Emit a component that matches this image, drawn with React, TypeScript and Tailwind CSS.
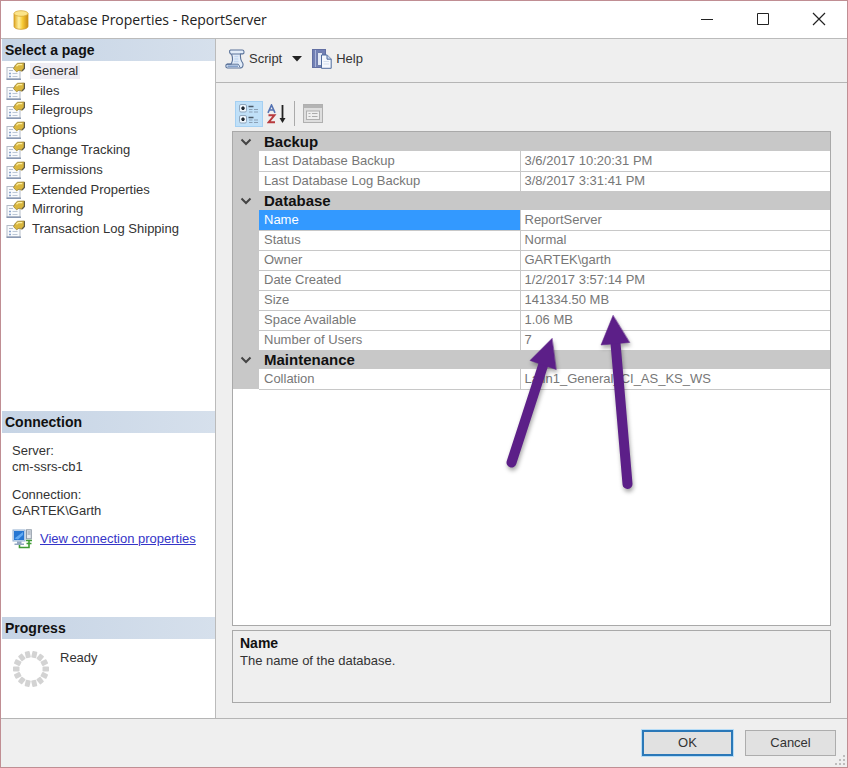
import { useState } from "react";
import type { ReactNode } from "react";

const pages = [
  "General",
  "Files",
  "Filegroups",
  "Options",
  "Change Tracking",
  "Permissions",
  "Extended Properties",
  "Mirroring",
  "Transaction Log Shipping",
];

type Category = { title: string; rows: [string, string][] };

const categories: Category[] = [
  {
    title: "Backup",
    rows: [
      ["Last Database Backup", "3/6/2017 10:20:31 PM"],
      ["Last Database Log Backup", "3/8/2017 3:31:41 PM"],
    ],
  },
  {
    title: "Database",
    rows: [
      ["Name", "ReportServer"],
      ["Status", "Normal"],
      ["Owner", "GARTEK\\garth"],
      ["Date Created", "1/2/2017 3:57:14 PM"],
      ["Size", "141334.50 MB"],
      ["Space Available", "1.06 MB"],
      ["Number of Users", "7"],
    ],
  },
  {
    title: "Maintenance",
    rows: [["Collation", "Latin1_General_CI_AS_KS_WS"]],
  },
];

const DatabaseIcon = () => (
  <svg width="16" height="20" viewBox="0 0 16 20">
    <defs>
      <linearGradient id="gold">
        <stop offset="0" stopColor="#e0a820" />
        <stop offset="0.35" stopColor="#fff0a0" />
        <stop offset="0.6" stopColor="#f8cc38" />
        <stop offset="1" stopColor="#c98a14" />
      </linearGradient>
    </defs>
    <path
      d="M1 3.5v13C1 18 4 19.3 8 19.3s7-1.3 7-2.8v-13z"
      fill="url(#gold)"
      stroke="#cf9a25"
      strokeWidth="0.8"
    />
    <ellipse cx="8" cy="3.5" rx="7" ry="2.8" fill="#fbe48a" stroke="#d8a93a" strokeWidth="0.8" />
  </svg>
);

const PageIcon = () => (
  <svg width="20" height="18" viewBox="0 0 20 18" className="shrink-0">
    <rect x="1" y="5.5" width="13" height="11.5" fill="#f8fafc" stroke="#b4bcc7" />
    <path d="M0.5 17.2h14.5" stroke="#7587a5" strokeWidth="1.2" />
    <path d="M3 8.5h4" stroke="#b5bfcc" />
    <path d="M3 11.5h2M3 14.5h2" stroke="#8aa5cc" strokeWidth="1.4" />
    <path d="M6.5 11.5h5M6.5 14.5h5" stroke="#bcc7d6" strokeWidth="1.2" />
    <path
      d="M7.5 6.5 9.5 3l2-1.7L18.5 1v5.5L16 9.2l-3-1-2.4 1.6-1.6-1.6z"
      fill="#d9b63e"
      stroke="#9a8436"
      strokeWidth="0.8"
    />
    <path d="m10.5 4.2 1.8-1.6h4" stroke="#fff0a0" strokeWidth="1.2" fill="none" />
    <path d="M18.4 1.2v5.2L16 9" stroke="#5f5a48" strokeWidth="1.2" fill="none" />
  </svg>
);

const ScriptIcon = () => (
  <svg width="20" height="20" viewBox="0 0 20 20">
    <path
      d="M5.5 1h11.8c2 0 2.4 3.4.6 3.9h-2.4c-.4 3 .4 6.800 2.300 9.400.8 2-.2 4.500-2 4.700H2.300c-2-.4-2-3.600 0-3.900H6c1.800-2.800 1.700-6.800.6-9.800C4.600 5 3.700 1.600 5.500 1z"
      fill="#e3edf9"
      stroke="#5a7299"
      strokeWidth="1.1"
    />
    <path d="M6.8 5h8.2M1.8 15.200h11.400c1.200 1 1 2.800 2.300 3.400" stroke="#5a7299" fill="none" />
    <path d="M9.300 7.500h4M9.300 10h4M9 12.500h4.500" stroke="#c4d7f0" strokeWidth="1.3" />
    <path d="M2.500 17.200h10.500" stroke="#7f9cc8" strokeWidth="1.5" />
  </svg>
);

const HelpIcon = () => (
  <svg width="20" height="20" viewBox="0 0 20 20">
    <rect x="0.5" y="0.5" width="13" height="18" fill="#7180b4" stroke="#626fa3" />
    <path d="M3.5 1v17" stroke="#aab4d8" />
    <path d="M5.5 3.5h5v13h-5z" fill="#e4eaf6" stroke="#6f7cab" />
    <path d="M9.5 6h5.7l4 4v9.300H9.500z" fill="#f4f8fd" stroke="#4f6c9e" />
    <path d="M15 6v4.200h4.200" fill="#c5d5ec" stroke="#4f6c9e" />
    <path d="M11.500 12.500h5.500M11.500 15h5.500" stroke="#d3deed" />
  </svg>
);

const CategorizedIcon = () => (
  <svg width="20" height="20" viewBox="0 0 20 20">
    <rect x="0.5" y="0.5" width="7" height="7.5" rx="1.5" fill="#eef6fd" stroke="#8fa6bd" />
    <rect x="0.5" y="11.5" width="7" height="7.5" rx="1.5" fill="#eef6fd" stroke="#8fa6bd" />
    <path d="M2.3 4.3h3.4M4 2.6v3.4M2.3 15.3h3.4M4 13.6v3.4" stroke="#1f2730" strokeWidth="2" />
    <path d="M9.5 2.500h5M9.500 13.500h5" stroke="#4c5a68" strokeWidth="1.3" />
    <path
      d="M10 5.500h3.500M15 5.500h4M10 8h3.500M15 8h4M10 16h3.500M15 16h4M10 18.500h3.500M15 18.500h4"
      stroke="#8ba0b5"
      strokeWidth="1.2"
    />
  </svg>
);

const SortIcon = () => (
  <svg width="20" height="20" viewBox="0 0 20 20" fill="none">
    <path d="M1 8.800 4.500 1 8 8.800M2.300 6h4.400" stroke="#5573b3" strokeWidth="1.6" />
    <path d="M1.500 11.200h6L1.700 18.200h6.300" stroke="#b83a3e" strokeWidth="1.9" />
    <path d="M15.500 1v15" stroke="#222" strokeWidth="1.8" />
    <path d="m12.500 14 3 5 3-5z" fill="#222" />
  </svg>
);

const PropertyPagesIcon = () => (
  <svg width="20" height="19" viewBox="0 0 20 19" fill="none">
    <rect x="0.5" y="0.5" width="19" height="18" fill="#dedede" stroke="#b0b0b0" />
    <path d="M1 2.500h18" stroke="#b4b4b4" strokeWidth="3" />
    <rect x="3.5" y="7" width="13" height="8.5" fill="#efefef" stroke="#b0b0b0" />
    <path d="M5.500 9.500h2M9 9.500h5.500M5.500 12.500h2M9 12.500h5.500" stroke="#adadad" strokeWidth="1.2" />
  </svg>
);

const ConnectionIcon = () => (
  <svg width="21" height="20" viewBox="0 0 21 20" fill="none">
    <rect x="1" y="1" width="12" height="11" fill="#d8e9fa" stroke="#8fadd0" />
    <rect x="2" y="2" width="10" height="9" fill="#2576d2" />
    <path d="M2.500 9.500 11 3v3L6 10.500z" fill="#62aaf2" />
    <path d="M5 12.500h4.500v2H12V16H2.500v-1.500H5z" fill="#91a6c0" />
    <rect x="14.5" y="0.8" width="4.8" height="9" fill="#e6eaef" stroke="#8c98a6" />
    <path d="M15.500 3h3M15.500 5h3" stroke="#8c98a6" />
    <path d="M7.500 16v2.500H17V11M14 11.500h6M14.500 14.500h5" stroke="#3f9b35" strokeWidth="1.6" />
  </svg>
);

const Spinner = () => (
  <svg width="38" height="38" viewBox="0 0 38 38">
    {Array.from({ length: 14 }, (_, i) => (
      <rect
        key={i}
        x="16.5"
        y="1"
        width="5"
        height="6.5"
        rx="0.8"
        fill="#d3d3d3"
        transform={`rotate(${(i * 360) / 14 + 13} 19 19)`}
      />
    ))}
  </svg>
);

// purple callout arrows drawn over the property grid
const Arrows = () => (
  <svg
    width="150"
    height="190"
    viewBox="500 310 150 190"
    className="pointer-events-none absolute left-[267px] top-[178px] drop-shadow-[1px_3px_2px_rgba(0,0,0,0.35)]"
  >
    <g fill="#5c1f88" stroke="#5c1f88" strokeLinecap="round">
      <path d="M511.500 462.500 543.500 364" strokeWidth="10" />
      <path d="M552 338.500 530 360.500 556 369.500z" strokeWidth="0.5" />
      <path d="M627.500 484 615.500 343" strokeWidth="10" />
      <path d="M613 315.500 601 345 629.500 342.500z" strokeWidth="0.5" />
    </g>
  </svg>
);

const SectionHeader = ({ children }: { children: ReactNode }) => (
  <h2 className="h-[22px] bg-linear-to-r from-[#c6d4e5] to-[#d6e0ec] pl-[3px] text-[14px] leading-[22px] font-bold text-[#111]">
    {children}
  </h2>
);

const Chevron = () => (
  <svg width="12" height="8" viewBox="0 0 12 8" fill="none" className="mx-auto">
    <path d="m1.500 1.500 4.500 4.500 4.500-4.500" stroke="#444" strokeWidth="2" />
  </svg>
);

const App = () => {
  const [page, setPage] = useState("General");
  const [selected, setSelected] = useState("Name");

  return (
    <div className="flex min-h-screen flex-col border border-[#c08e93] bg-[#efefef] font-['Liberation_Sans',Arial,sans-serif] text-[13px] leading-4 text-[#333]">
      <header className="flex h-[38px] items-center border-b border-[#bbb] bg-white pl-3">
        <DatabaseIcon />
        <h1 className="ml-[7px] flex-1 font-['Open_Sans',sans-serif] text-[14px] text-[#222]">
          Database Properties - ReportServer
        </h1>
        <div className="flex h-full pb-[2px]">
          <button aria-label="Minimize" className="flex w-14 items-center justify-center">
            <svg width="14" height="14" viewBox="0 0 14 14" stroke="#222">
              <path d="M1 7.500h12" />
            </svg>
          </button>
          <button aria-label="Maximize" className="flex w-14 items-center justify-center">
            <svg width="14" height="14" viewBox="0 0 14 14" fill="none" stroke="#222">
              <path d="M1.500 1.500h11v11h-11z" />
            </svg>
          </button>
          <button aria-label="Close" className="flex w-14 items-center justify-center">
            <svg width="14" height="14" viewBox="0 0 14 14" stroke="#222" strokeWidth="1.2">
              <path d="m1 1 12 12M13 1 1 13" />
            </svg>
          </button>
        </div>
      </header>

      <main className="flex flex-1 border-b border-[#b5b5b5]">
        <aside className="flex w-[215px] shrink-0 flex-col border-r border-[#bbb] bg-white pl-px">
          <SectionHeader>Select a page</SectionHeader>
          <nav className="flex-1">
            <ul className="flex h-[178px] flex-col">
              {pages.map((item) => (
                <li key={item} className="flex-1">
                  <button
                    onClick={() => setPage(item)}
                    className="flex h-full items-center gap-1 pl-1 text-left"
                  >
                    <PageIcon />
                    <span className={page === item ? "bg-[#efedf4] px-[2px]" : "px-[2px]"}>
                      {item}
                    </span>
                  </button>
                </li>
              ))}
            </ul>
          </nav>

          <SectionHeader>Connection</SectionHeader>
          <div className="h-[184px] px-[10px] pt-[10px]">
            <p>Server:</p>
            <p>cm-ssrs-cb1</p>
            <p className="mt-3">Connection:</p>
            <p>GARTEK\Garth</p>
            <div className="mt-[10px] flex items-center gap-[7px]">
              <ConnectionIcon />
              <a href="#connection" className="text-[#3535c8] underline">
                View connection properties
              </a>
            </div>
          </div>

          <SectionHeader>Progress</SectionHeader>
          <div className="flex h-[79px] gap-[10px] pt-[11px] pl-[10px]">
            <Spinner />
            <p>Ready</p>
          </div>
        </aside>

        <section className="flex min-w-0 flex-1 flex-col">
          <div className="flex h-[44px] items-center border-b border-[#b5b5b5] pb-[3px] pl-[9px]">
            <button className="flex items-center gap-1">
              <ScriptIcon />
              Script
            </button>
            <button aria-label="Script options" className="flex w-[30px] justify-center">
              <svg width="10" height="6" viewBox="0 0 10 6">
                <path d="M0 0h10L5 5.500z" fill="#222" />
              </svg>
            </button>
            <button className="flex items-center gap-1">
              <HelpIcon />
              Help
            </button>
          </div>

          <div className="flex flex-1 flex-col px-4 pt-[17px] pb-[15px]">
            <div className="mb-1 flex h-[27px] items-center pl-[3px]">
              <button
                aria-label="Categorized"
                className="flex h-[26px] w-[28px] items-center justify-center border border-[#a5d0f2] bg-[#c0e0f8]"
              >
                <CategorizedIcon />
              </button>
              <button aria-label="Alphabetical" className="flex w-[28px] items-center justify-center">
                <SortIcon />
              </button>
              <div className="ml-[3px] h-[25px] w-px bg-[#aaa]" />
              <button aria-label="Property pages" disabled className="ml-2">
                <PropertyPagesIcon />
              </button>
            </div>

            <div className="relative flex-1 border border-[#a9a9a9] bg-white">
              <table className="w-full table-fixed border-collapse text-[#777]">
                <colgroup>
                  <col className="w-[26px]" />
                  <col className="w-[261px]" />
                  <col />
                </colgroup>
                {categories.map((category) => (
                  <tbody key={category.title}>
                    <tr className="h-[19px] bg-[#c8c8c8]">
                      <td className="p-0">
                        <Chevron />
                      </td>
                      <th
                        colSpan={2}
                        className="p-0 pl-[5px] text-left text-[15px] font-bold text-[#111]"
                      >
                        {category.title}
                      </th>
                    </tr>
                    {category.rows.map(([name, value]) => (
                      <tr key={name} onClick={() => setSelected(name)} className="h-5">
                        <td className="bg-[#c8c8c8] p-0" />
                        <td
                          className={
                            selected === name
                              ? "border-b border-[#c8c8c8] bg-[#3399ff] p-0 pl-[5px] text-white"
                              : "border-b border-[#c8c8c8] p-0 pl-[5px]"
                          }
                        >
                          {name}
                        </td>
                        <td className="border-b border-l border-[#c8c8c8] p-0 pl-1">{value}</td>
                      </tr>
                    ))}
                  </tbody>
                ))}
              </table>
              <Arrows />
            </div>

            <div className="mt-1 h-[73px] border border-[#a9a9a9] px-[7px] pt-[3px]">
              <h3 className="text-[14px] leading-[18px] font-bold text-[#111]">{selected}</h3>
              <p className="leading-[18px]">The name of the database.</p>
            </div>
          </div>
        </section>
      </main>

      <footer className="relative flex h-[48px] items-center justify-end gap-3 pr-[11px]">
        <button className="h-[26px] w-[91px] border-2 border-[#2a78b8] bg-[#e1e1e1] outline outline-[#b5dcf7]">
          OK
        </button>
        <button className="h-[26px] w-[91px] border border-[#adadad] bg-[#e1e1e1]">Cancel</button>
        <svg width="11" height="11" viewBox="0 0 11 11" className="absolute right-px bottom-px">
          <path
            d="M8 0h2v2H8zM4 4h2v2H4zM8 4h2v2H8zM0 8h2v2H0zM4 8h2v2H4zM8 8h2v2H8z"
            fill="#bdbdbd"
          />
        </svg>
      </footer>
    </div>
  );
};

export default App;
